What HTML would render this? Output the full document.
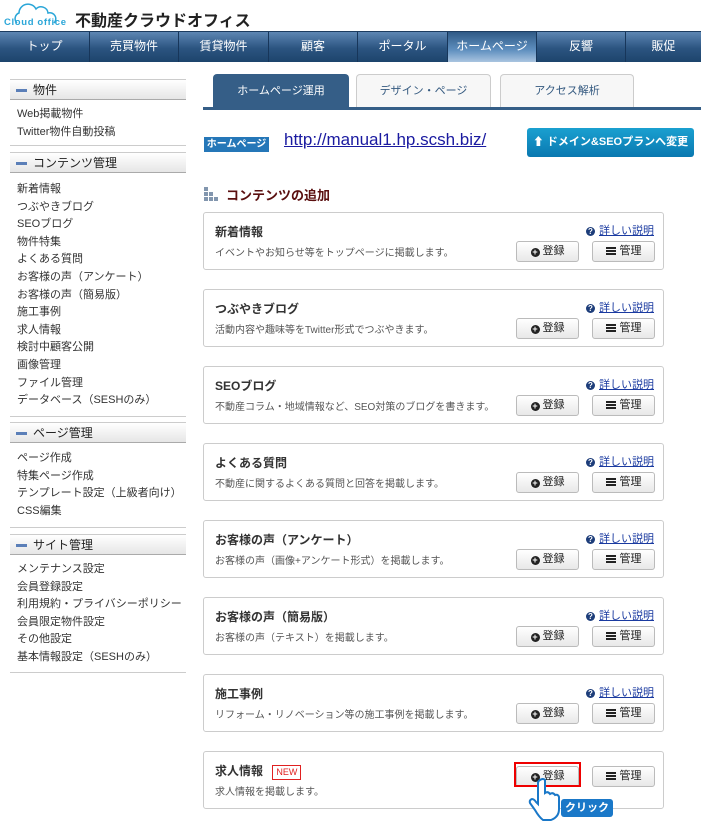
<!DOCTYPE html>
<html><head><meta charset="utf-8"><style>
*{margin:0;padding:0;box-sizing:border-box}
body{width:701px;height:824px;overflow:hidden;background:#fff;font-family:"Liberation Sans","Noto Sans CJK JP",sans-serif;font-size:11px;color:#333;position:relative}
.abs{position:absolute}
.nav{left:0;top:31px;width:701px;height:31px;background:linear-gradient(#5d86b3,#2b5480 55%,#1d446c);border-top:1px solid #1c3c60}
.nav div{position:absolute;top:0;height:30px;line-height:29px;color:#fff;text-align:center;font-size:12px;border-left:1px solid #17365a}
.nav .on{background:linear-gradient(#2f5a86,#5f8fbf 60%,#a9c4e0)}
.sh{left:10px;width:176px;height:21px;background:linear-gradient(#fff,#e6e6e6);border-top:1px solid #ccc;border-bottom:1px solid #aaa;font-size:12px;line-height:20px;padding-left:23px;color:#222}
.sh:before{content:"";position:absolute;left:6px;top:9px;width:11px;height:3px;background:#5b7fb8}
.sep{left:10px;width:176px;height:1px;background:#ccc}
.it{left:17px;font-size:11px;line-height:17.6px;color:#333}
.tab{top:74px;height:34px;border:1px solid #ccc;border-bottom:none;border-radius:4px 4px 0 0;background:#f7f7f7;text-align:center;line-height:32px;color:#355a80;font-size:11px}
.card{left:203px;width:461px;height:58px;border:1px solid #ccc;border-radius:3px}
.card .t{position:absolute;left:11px;top:10px;font-size:12px;font-weight:bold;color:#333}
.card .d{position:absolute;left:11px;top:31px;font-size:10px;color:#555}
.card .h{position:absolute;right:9px;top:9px;font-size:11px;color:#1a3aa0;text-decoration:underline}
.card .h:before{content:"?";display:inline-block;width:9px;height:9px;border-radius:50%;background:#1d3d7a;color:#fff;font-size:8px;line-height:9px;text-align:center;margin-right:4px;text-decoration:none;font-weight:bold}
.btn{position:absolute;top:28px;height:21px;border:1px solid #bbb;border-radius:3px;background:linear-gradient(#fff,#e8e8e8);font-size:11px;line-height:19px;text-align:center;color:#222}
.b1{left:312px;width:63px}.b2{left:388px;width:63px}
.pl{display:inline-block;width:9px;height:9px;border-radius:50%;background:#222;color:#fff;font-size:9px;line-height:9px;font-weight:bold;vertical-align:-1px;margin-right:3px}
.ls{display:inline-block;width:10px;height:8px;vertical-align:-1px;margin-right:4px;background:linear-gradient(#222 0,#222 2px,transparent 2px,transparent 3px,#222 3px,#222 5px,transparent 5px,transparent 6px,#222 6px)}
</style></head><body>
<svg class="abs" style="left:3px;top:3px" width="68" height="26"><path d="M14 20 a6 6 0 0 1 2-10 a9 9 0 0 1 17-4 a7 7 0 0 1 12 4 a6 6 0 0 1 6 10" fill="none" stroke="#2aa6d8" stroke-width="1.5"/><text x="1" y="22" font-size="9.5" font-weight="bold" fill="#2aa6d8" font-family="Liberation Sans" textLength="62">Cloud office</text></svg>
<div class="abs" style="left:75px;top:7px;font-size:16px;font-weight:bold;color:#222">不動産クラウドオフィス</div>
<div class="abs nav">
<div style="left:0;width:89px;border:none">トップ</div><div style="left:89px;width:89px">売買物件</div><div style="left:178px;width:90px">賃貸物件</div><div style="left:268px;width:89px">顧客</div><div style="left:357px;width:90px">ポータル</div><div class="on" style="left:447px;width:89px">ホームページ</div><div style="left:536px;width:89px">反響</div><div style="left:625px;width:76px">販促</div>
</div>
<div class="abs sh" style="top:79px">物件</div>
<div class="abs it" style="top:106px">Web掲載物件<br>Twitter物件自動投稿</div>
<div class="abs sep" style="top:145px"></div>
<div class="abs sh" style="top:152px">コンテンツ管理</div>
<div class="abs it" style="top:181px">新着情報<br>つぶやきブログ<br>SEOブログ<br>物件特集<br>よくある質問<br>お客様の声（アンケート）<br>お客様の声（簡易版）<br>施工事例<br>求人情報<br>検討中顧客公開<br>画像管理<br>ファイル管理<br>データベース（SESHのみ）</div>
<div class="abs sep" style="top:416px"></div>
<div class="abs sh" style="top:422px">ページ管理</div>
<div class="abs it" style="top:450px">ページ作成<br>特集ページ作成<br>テンプレート設定（上級者向け）<br>CSS編集</div>
<div class="abs sep" style="top:527px"></div>
<div class="abs sh" style="top:534px">サイト管理</div>
<div class="abs it" style="top:561px">メンテナンス設定<br>会員登録設定<br>利用規約・プライバシーポリシー<br>会員限定物件設定<br>その他設定<br>基本情報設定（SESHのみ）</div>
<div class="abs sep" style="top:672px"></div>
<div class="abs tab" style="left:213px;width:136px;background:#355e87;color:#fff;border-color:#355e87">ホームページ運用</div>
<div class="abs tab" style="left:356px;width:135px">デザイン・ページ</div>
<div class="abs tab" style="left:500px;width:134px">アクセス解析</div>
<div class="abs" style="left:203px;top:107px;width:498px;height:3px;background:#355e87"></div>
<div class="abs" style="left:204px;top:137px;width:65px;height:15px;background:#2577b8;color:#fff;font-size:10px;line-height:15px;text-align:center;font-weight:bold">ホームページ</div>
<div class="abs" style="left:284px;top:130px;font-size:17px;color:#1a1aa0;text-decoration:underline">http://manual1.hp.scsh.biz/</div>
<div class="abs" style="left:527px;top:128px;width:167px;height:29px;background:linear-gradient(#1aa0d0,#0a78b0);border-radius:3px;color:#fff;font-size:11px;line-height:29px;text-align:center;font-weight:bold">⬆ ドメイン&amp;SEOプランへ変更</div>
<svg class="abs" style="left:204px;top:187px" width="14" height="14" fill="#8296ae"><rect x="0" y="0" width="4" height="4"/><rect x="0" y="5" width="4" height="4"/><rect x="5" y="5" width="4" height="4"/><rect x="0" y="10" width="4" height="4"/><rect x="5" y="10" width="4" height="4"/><rect x="10" y="10" width="4" height="4"/></svg>
<div class="abs" style="left:226px;top:185px;font-size:13px;font-weight:bold;color:#5a0f0f">コンテンツの追加</div>

<div class="abs card" style="top:212px"><div class="t">新着情報</div><div class="d">イベントやお知らせ等をトップページに掲載します。</div><div class="h">詳しい説明</div><div class="btn b1"><span class="pl">+</span>登録</div><div class="btn b2"><span class="ls"></span>管理</div></div>
<div class="abs card" style="top:289px"><div class="t">つぶやきブログ</div><div class="d">活動内容や趣味等をTwitter形式でつぶやきます。</div><div class="h">詳しい説明</div><div class="btn b1"><span class="pl">+</span>登録</div><div class="btn b2"><span class="ls"></span>管理</div></div>
<div class="abs card" style="top:366px"><div class="t">SEOブログ</div><div class="d">不動産コラム・地域情報など、SEO対策のブログを書きます。</div><div class="h">詳しい説明</div><div class="btn b1"><span class="pl">+</span>登録</div><div class="btn b2"><span class="ls"></span>管理</div></div>
<div class="abs card" style="top:443px"><div class="t">よくある質問</div><div class="d">不動産に関するよくある質問と回答を掲載します。</div><div class="h">詳しい説明</div><div class="btn b1"><span class="pl">+</span>登録</div><div class="btn b2"><span class="ls"></span>管理</div></div>
<div class="abs card" style="top:520px"><div class="t">お客様の声（アンケート）</div><div class="d">お客様の声（画像+アンケート形式）を掲載します。</div><div class="h">詳しい説明</div><div class="btn b1"><span class="pl">+</span>登録</div><div class="btn b2"><span class="ls"></span>管理</div></div>
<div class="abs card" style="top:597px"><div class="t">お客様の声（簡易版）</div><div class="d">お客様の声（テキスト）を掲載します。</div><div class="h">詳しい説明</div><div class="btn b1"><span class="pl">+</span>登録</div><div class="btn b2"><span class="ls"></span>管理</div></div>
<div class="abs card" style="top:674px"><div class="t">施工事例</div><div class="d">リフォーム・リノベーション等の施工事例を掲載します。</div><div class="h">詳しい説明</div><div class="btn b1"><span class="pl">+</span>登録</div><div class="btn b2"><span class="ls"></span>管理</div></div>
<div class="abs card" style="top:751px"><div class="t">求人情報 <span style="display:inline-block;border:1px solid #e02020;color:#e02020;font-size:9px;font-weight:normal;padding:0 3px;margin-left:6px;line-height:13px">NEW</span></div><div class="d">求人情報を掲載します。</div><div class="btn b1" style="top:14px"><span class="pl">+</span>登録</div><div class="btn b2" style="top:14px"><span class="ls"></span>管理</div></div>
<div class="abs" style="left:514px;top:762px;width:67px;height:25px;border:2px solid #e00"></div>
<div class="abs" style="left:561px;top:799px;width:52px;height:18px;background:#1a78c8;border-radius:3px;color:#fff;font-size:11px;font-weight:bold;line-height:18px;text-align:center">クリック</div>
<svg class="abs" style="left:528px;top:778px" width="36" height="44"><path d="M12 2 q3-2 5 0 v13 q3-2 5 1 q3-2 5 1 q3-1 4 2 v12 q0 8-8 11 h-8 q-4-3-8-10 l-5-7 q-1-3 2-4 q2 0 4 3 l2 2 v-21 q0-2 2-3z" fill="#fff" stroke="#1a78c8" stroke-width="2"/></svg>
</body></html>
